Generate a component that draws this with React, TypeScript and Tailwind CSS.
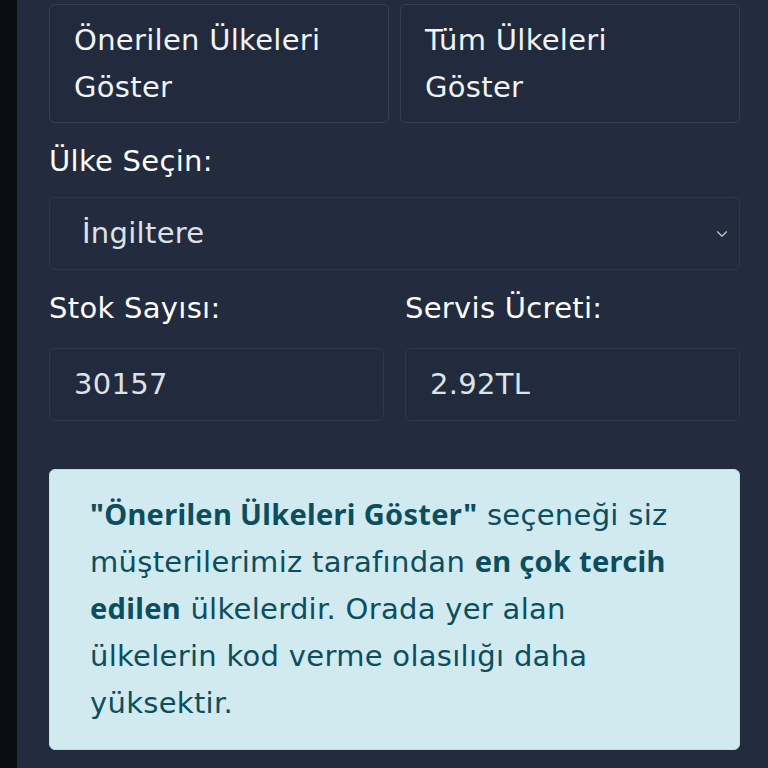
import { ChevronDown } from "lucide-react";

const font = { fontFamily: '"DejaVu Sans", "Noto Sans", sans-serif' };
const boldFont = { fontFamily: '"Noto Sans", "DejaVu Sans", sans-serif' };

function OptionButton({ label }: { label: string }) {
    return (
        <button
            type="button"
            className="flex-1 h-[119px] rounded-md border border-[#344055] bg-[#212b3d] pl-[24px] pr-[40px] text-left text-[29px] leading-[47px] tracking-[0.3px] text-[#f1f3f5]"
        >
            {label}
        </button>
    );
}

function ReadonlyField({ label, value }: { label: string; value: string }) {
    return (
        <div className="flex flex-col">
            <label className="h-[40px] text-[29px] leading-[40px] tracking-[0.3px] text-white">{label}</label>
            <div className="mt-[20px] flex h-[73px] items-center rounded-md border border-[#2e394b] bg-[#212b3d] pl-[24px] text-[29px] tracking-[0.3px] text-[#dee2e6]">
                {value}
            </div>
        </div>
    );
}

function Strong({ children }: { children: string }) {
    return (
        <b className="font-bold leading-none" style={boldFont}>
            {children}
        </b>
    );
}

export default function App() {
    return (
        <div className="flex h-[768px] w-[768px] overflow-hidden bg-[#222c3e] tracking-[0.3px]" style={font}>
            <div className="w-[17px] shrink-0 bg-[#090d13]" />
            <main className="flex flex-1 flex-col pl-[32px] pr-[28px] pt-[4px]">
                <div className="flex gap-[11px]">
                    <OptionButton label="Önerilen Ülkeleri Göster" />
                    <OptionButton label="Tüm Ülkeleri Göster" />
                </div>

                <label className="mt-[18px] h-[40px] text-[29px] leading-[40px] text-white">Ülke Seçin:</label>
                <div className="mt-[16px] flex h-[73px] items-center justify-between rounded-md border border-[#2e394b] bg-[#222c3e] pl-[32px] pr-[8px] text-[29px] text-[#dee2e6]">
                    <span>İngiltere</span>
                    <ChevronDown className="h-[18px] w-[18px] text-[#c7ccd4]" strokeWidth={1.5} />
                </div>

                <div className="mt-[18px] grid grid-cols-[335px_1fr] gap-[21px]">
                    <ReadonlyField label="Stok Sayısı:" value="30157" />
                    <ReadonlyField label="Servis Ücreti:" value="2.92TL" />
                </div>

                <div className="mt-[48px] rounded-md border border-[#b9dfe8] bg-[#d0eaf0] pl-[40px] pr-[44px] py-[22px] text-[29px] leading-[47px] text-[#0c4e5d]">
                    <Strong>"Önerilen Ülkeleri Göster"</Strong> seçeneği siz müşterilerimiz tarafından{" "}
                    <Strong>en çok tercih edilen</Strong> ülkelerdir. Orada yer alan ülkelerin kod verme olasılığı
                    daha yüksektir.
                </div>
            </main>
        </div>
    );
}
